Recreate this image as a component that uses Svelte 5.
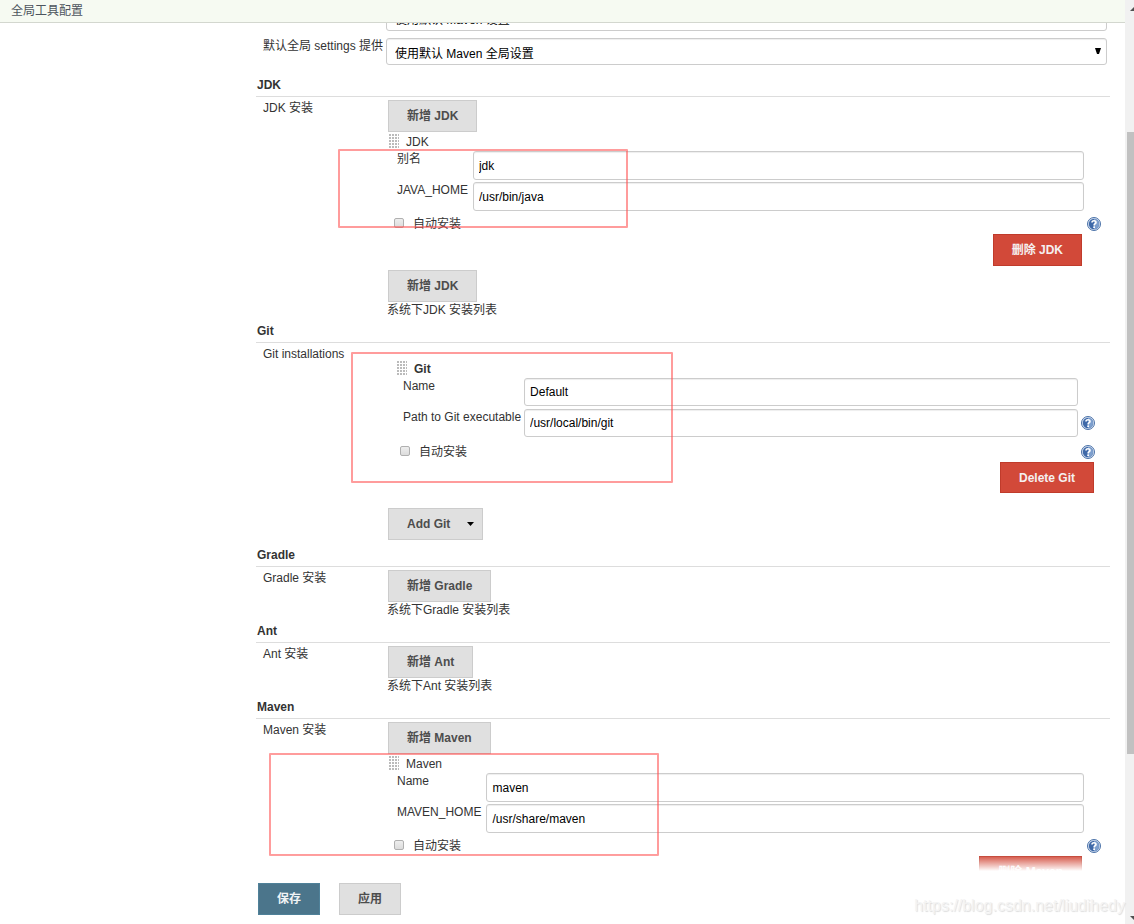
<script lang="ts">
  type Field = { id: string; label: string; value: string; help?: boolean };
  type Installation = { title: string; fields: Field[]; remove: string };
  type Tool = {
    key: string;
    name: string;
    label: string;
    add: string;
    hint?: string;
    installation?: Installation;
  };

  const tools: Tool[] = [
    {
      key: 'jdk',
      name: 'JDK',
      label: 'JDK 安装',
      add: '新增 JDK',
      hint: '系统下JDK 安装列表',
      installation: {
        title: 'JDK',
        fields: [
          { id: 'jdk-name', label: '别名', value: 'jdk' },
          { id: 'jdk-home', label: 'JAVA_HOME', value: '/usr/bin/java' },
        ],
        remove: '删除 JDK',
      },
    },
    {
      key: 'git',
      name: 'Git',
      label: 'Git installations',
      add: 'Add Git',
      installation: {
        title: 'Git',
        fields: [
          { id: 'git-name', label: 'Name', value: 'Default' },
          { id: 'git-path', label: 'Path to Git executable', value: '/usr/local/bin/git', help: true },
        ],
        remove: 'Delete Git',
      },
    },
    { key: 'gradle', name: 'Gradle', label: 'Gradle 安装', add: '新增 Gradle', hint: '系统下Gradle 安装列表' },
    { key: 'ant', name: 'Ant', label: 'Ant 安装', add: '新增 Ant', hint: '系统下Ant 安装列表' },
    {
      key: 'maven',
      name: 'Maven',
      label: 'Maven 安装',
      add: '新增 Maven',
      installation: {
        title: 'Maven',
        fields: [
          { id: 'maven-name', label: 'Name', value: 'maven' },
          { id: 'maven-home', label: 'MAVEN_HOME', value: '/usr/share/maven' },
        ],
        remove: '删除 Maven',
      },
    },
  ];
</script>

{#snippet helpIcon()}
  <button type="button" class="help" aria-label="Help">
    <svg width="14" height="14" viewBox="0 0 14 14">
      <circle cx="7" cy="7" r="6.5" fill="#d5e0f0" stroke="#4a72a8" />
      <circle cx="7" cy="7" r="5.2" fill="#3f69a8" />
      <path d="M7 1.8a5.2 5.2 0 0 1 0 10.4z" fill="#7d9fce" />
      <path d="M5 5.5Q5 3.7 7 3.7T9 5.4Q9 6.4 7.8 7Q7.1 7.4 7.1 8.5" fill="none" stroke="#fff" stroke-width="1.6" />
      <rect x="6.2" y="9.4" width="1.8" height="1.6" fill="#fff" />
    </svg>
  </button>
{/snippet}

{#snippet entry(key: string, item: Installation)}
  <div class="entry {key}">
    <div class="entry-title">
      <span class="handle"></span>
      <span>{item.title}</span>
    </div>
    <div class="fields">
      {#each item.fields as field}
        <label for={field.id}>{field.label}</label>
        <input id={field.id} type="text" value={field.value} />
        <div class="help-cell">
          {#if field.help}{@render helpIcon()}{/if}
        </div>
      {/each}
    </div>
    <div class="auto-install">
      <label><input type="checkbox" />自动安装</label>
      {@render helpIcon()}
    </div>
    <div class="entry-actions">
      <button type="button" class="btn danger">{item.remove}</button>
    </div>
    <div class="mark"></div>
  </div>
{/snippet}

<div class="window">
  <div class="page">
    <header><a href="#top">全局工具配置</a></header>

    <div class="content">
      <aside></aside>
      <main>
        <div class="row defaults">
          <div></div>
          <div class="select">
            <select aria-label="settings"><option>使用默认 Maven 设置</option></select>
          </div>
        </div>
        <div class="row defaults">
          <label for="global-settings">默认全局 settings 提供</label>
          <div class="select">
            <select id="global-settings"><option>使用默认 Maven 全局设置</option></select>
            <svg width="6" height="6" viewBox="0 0 6 6"><path d="M0 0h6L4 6H2z" /></svg>
          </div>
        </div>

        {#each tools as tool}
          <section>
            <h2>{tool.name}</h2>
            <div class="row">
              <div class="row-label">{tool.label}</div>
              <div class="row-body">
                {#if tool.key !== 'git'}
                  <button type="button" class="btn">{tool.add}</button>
                {/if}
                {#if tool.installation}
                  {@render entry(tool.key, tool.installation)}
                {/if}
                {#if tool.key === 'git'}
                  <button type="button" class="btn menu">
                    {tool.add}
                    <svg width="7" height="4" viewBox="0 0 7 4"><path d="M0 0h7L3.5 4z" /></svg>
                  </button>
                {:else if tool.installation && tool.hint}
                  <button type="button" class="btn">{tool.add}</button>
                {/if}
                {#if tool.hint}<div class="hint">{tool.hint}</div>{/if}
              </div>
            </div>
          </section>
        {/each}
      </main>
    </div>

    <footer>
      <button type="button" class="btn primary">保存</button>
      <button type="button" class="btn">应用</button>
    </footer>
    <div class="watermark">https://blog.csdn.net/liudihedy</div>
  </div>

  <div class="scrollbar">
    <svg width="9" height="17" viewBox="0 0 9 17"><path d="M5 11L9 7v4z" /></svg>
    <div class="track">
      <div class="before"></div>
      <div class="thumb"></div>
      <div class="after"></div>
    </div>
    <svg width="9" height="17" viewBox="0 0 9 17"><path d="M5 9h4v4z" /></svg>
  </div>
</div>

<style>
  :global(body) {
    margin: 0;
    background: #fff;
  }
  .window {
    display: flex;
    height: 100vh;
    overflow: hidden;
    color: #333;
    font: 12px/16px "Liberation Sans", "Noto Sans CJK SC", sans-serif;
  }
  .page {
    position: relative;
    display: flex;
    flex: 1;
    flex-direction: column;
    min-width: 0;
  }
  header {
    flex: none;
    padding: 3px 11px;
    border-bottom: 1px solid #d3d7cf;
    background: #f6faf2;
  }
  header a {
    color: #4d545d;
    text-decoration: none;
  }
  .content {
    display: flex;
    flex: 1;
    min-height: 0;
    overflow: hidden;
  }
  aside {
    flex: 0 0 256px;
  }
  main {
    flex: 1;
    min-width: 0;
    margin-top: -19px;
    padding-right: 15px;
  }

  .row {
    display: grid;
    grid-template-columns: 123px 1fr;
    padding: 3px 0 0 7px;
  }
  .row.defaults {
    padding: 0 3px 7px 7px;
  }
  .row-body {
    min-width: 0;
  }
  .select {
    position: relative;
  }
  .select svg {
    position: absolute;
    top: 10px;
    right: 6px;
  }
  select {
    display: block;
    box-sizing: border-box;
    width: 100%;
    height: 27px;
    padding: 5px 8px 0;
    border: 1px solid #ccc;
    border-radius: 3px;
    background: #fff;
    box-shadow: inset 0 1px 1px #eee;
    color: #000;
    font: inherit;
    appearance: none;
  }
  h2 {
    margin: 0;
    padding: 5px 0 3px 1px;
    border-bottom: 1px solid #ddd;
    font-size: 12px;
    line-height: 16px;
  }
  .hint {
    padding-left: 1px;
  }

  .btn {
    display: block;
    height: 32px;
    margin: 0 0 0 2px;
    padding: 0 18px;
    border: 1px solid #ccc;
    border-radius: 0;
    background: #e0e0e0;
    color: #4d4d4d;
    font: bold 12px/16px "Liberation Sans", "Noto Sans CJK SC", sans-serif;
    white-space: nowrap;
  }
  .btn.menu {
    display: flex;
    align-items: center;
    gap: 17px;
    margin-bottom: 2px;
    padding-right: 8px;
  }
  .btn.menu svg {
    fill: #000;
  }
  .btn.danger {
    border-color: #c03b2b;
    background: #d24939;
    color: #f5f0f0;
  }
  .btn.primary {
    border-color: #4f8199;
    background: #4b758b;
    color: #f0f3f5;
  }

  .entry {
    position: relative;
    padding-bottom: 4px;
  }
  .entry-title {
    display: flex;
    align-items: center;
    gap: 7px;
    height: 19px;
    padding-left: 3px;
  }
  .handle {
    width: 10px;
    height: 15px;
    background: radial-gradient(circle at 1px 1px, #bbb 1px, transparent 1px) 0 0 / 3px 3px;
  }
  .fields {
    display: grid;
    grid-template-columns: auto 1fr 26px;
    row-gap: 2px;
    padding-left: 11px;
  }
  .fields label {
    padding-right: 5px;
  }
  .fields input {
    box-sizing: border-box;
    width: 100%;
    height: 29px;
    padding: 0 5px;
    border: 1px solid #ccc;
    border-radius: 3px;
    background: #fff;
    box-shadow: inset 0 1px 1px #eee;
    color: #000;
    font: inherit;
  }
  .help-cell {
    align-self: center;
    padding-left: 3px;
  }
  .help {
    display: block;
    width: 14px;
    height: 14px;
    padding: 0;
    border: 0;
    background: none;
  }
  .help svg {
    display: block;
  }
  .auto-install {
    display: flex;
    align-items: center;
    justify-content: space-between;
    padding: 5px 9px 2px 8px;
  }
  .auto-install label {
    display: flex;
    gap: 9px;
  }
  .auto-install input {
    box-sizing: border-box;
    width: 10px;
    height: 10px;
    margin: 2px 0 0;
    border: 1px solid #b0b0b0;
    border-radius: 2px;
    background: linear-gradient(#eee, #dcdcdc);
    appearance: none;
  }
  .entry-actions {
    display: flex;
    justify-content: flex-end;
    padding-right: 28px;
  }

  .entry.git {
    padding: 13px 0 15px 8px;
  }
  .git .entry-title {
    font-weight: bold;
  }
  .git .fields {
    row-gap: 3px;
    padding: 0 6px 0 9px;
  }
  .git .fields label {
    padding-right: 3px;
  }
  .git .fields input {
    height: 28px;
  }
  .git .auto-install {
    padding: 7px 15px 2px 6px;
  }
  .git .entry-actions {
    padding-right: 16px;
  }
  .git .btn {
    height: 31px;
  }

  /* red outlines drawn over the installations */
  .mark {
    position: absolute;
    box-sizing: border-box;
    border: 2px solid #ff505090;
    border-radius: 1px;
    pointer-events: none;
  }
  .jdk .mark {
    top: 17px;
    left: -48px;
    width: 290px;
    height: 79px;
  }
  .git .mark {
    top: 6px;
    left: -35px;
    width: 322px;
    height: 131px;
  }
  .maven .mark {
    top: -1px;
    left: -117px;
    width: 390px;
    height: 103px;
  }

  footer {
    position: absolute;
    right: 0;
    bottom: 0;
    left: 256px;
    display: flex;
    gap: 17px;
    padding: 12px 0 9px;
    background: #fff;
  }
  footer::before {
    position: absolute;
    right: 0;
    bottom: 100%;
    left: 0;
    height: 16px;
    background: linear-gradient(#fff0, #fff);
    content: '';
  }
  .watermark {
    position: absolute;
    right: 0;
    bottom: 9px;
    color: #f4f4f4;
    font-size: 16px;
    line-height: 18px;
    text-shadow: 1px 1px 1px #ddd;
  }

  .scrollbar {
    display: flex;
    flex: 0 0 9px;
    flex-direction: column;
    background: #f1f1f1;
  }
  .scrollbar svg {
    flex: none;
    fill: #505050;
  }
  .track {
    display: flex;
    flex: 1;
    flex-direction: column;
    padding-left: 2px;
  }
  .before {
    flex: 115;
  }
  .thumb {
    flex: 622;
    background: #c1c1c1;
  }
  .after {
    flex: 153;
  }
</style>
